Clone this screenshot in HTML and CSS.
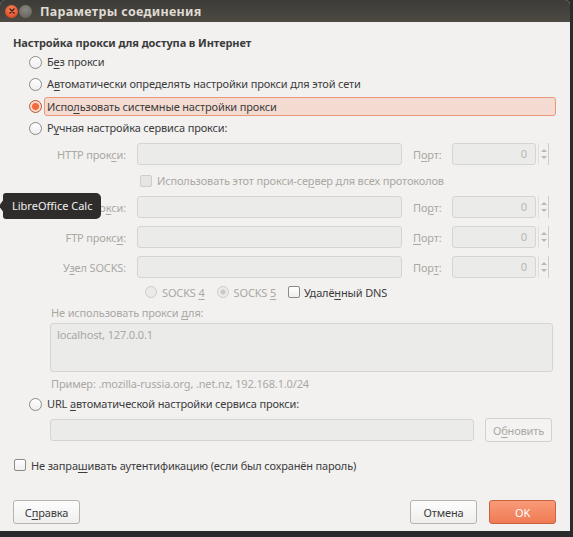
FILE: index.html
```html
<!DOCTYPE html>
<html lang="ru">
<head>
<meta charset="utf-8">
<title>Параметры соединения</title>
<link rel="stylesheet" href="styles.css">
</head>
<body>
<div class="screen">
  <div class="window">
    <div class="titlebar">
      <span class="wbtn close"><svg width="12" height="12" viewBox="0 0 12 12"><path d="M4 4 L8 8 M8 4 L4 8" stroke="#3a1a10" stroke-width="1.4" stroke-linecap="round"/></svg></span>
      <span class="wbtn min"></span>
      <span class="title">Параметры соединения</span>
    </div>
    <div class="content">
      <div class="heading">Настройка прокси для доступа в Интернет</div>
      <div class="opt"><span class="radio"></span><span class="otext">Б<u>е</u>з прокси</span></div>
      <div class="opt"><span class="radio"></span><span class="otext">А<u>в</u>томатически определять настройки прокси для этой сети</span></div>
      <div class="opt"><span class="radio on"></span><span class="otext focus">Испо<u>л</u>ьзовать системные настройки прокси</span></div>
      <div class="opt"><span class="radio"></span><span class="otext">Р<u>у</u>чная настройка сервиса прокси:</span></div>

      <div class="manual">
        <div class="prow">
          <span class="plabel">HTTP прок<u>с</u>и:</span>
          <span class="field host"></span>
          <span class="portlabel">П<u>о</u>рт:</span>
          <span class="spin"><span class="field port">0</span><span class="arrows"><i class="up"></i><i class="down"></i></span></span>
        </div>
        <div class="allrow"><span class="check dis"></span><span>Использовать этот прокси-се<u>р</u>вер для всех протоколов</span></div>
        <div class="prow">
          <span class="plabel">SSL про<u>к</u>си:</span>
          <span class="field host"></span>
          <span class="portlabel">По<u>р</u>т:</span>
          <span class="spin"><span class="field port">0</span><span class="arrows"><i class="up"></i><i class="down"></i></span></span>
        </div>
        <div class="prow gap">
          <span class="plabel">FTP прокс<u>и</u>:</span>
          <span class="field host"></span>
          <span class="portlabel"><u>П</u>орт:</span>
          <span class="spin"><span class="field port">0</span><span class="arrows"><i class="up"></i><i class="down"></i></span></span>
        </div>
        <div class="prow gap">
          <span class="plabel">У<u>з</u>ел SOCKS:</span>
          <span class="field host"></span>
          <span class="portlabel">Пор<u>т</u>:</span>
          <span class="spin"><span class="field port">0</span><span class="arrows"><i class="up"></i><i class="down"></i></span></span>
        </div>
        <div class="socksrow">
          <span class="sopt"><span class="radio dis"></span><span>SOCKS <u>4</u></span></span>
          <span class="sopt"><span class="radio dis sel"></span><span>SOCKS <u>5</u></span></span>
          <span class="sopt dns"><span class="check"></span><span>Удалё<u>н</u>ный DNS</span></span>
        </div>
        <div class="noproxy">Не использовать прокси <u>д</u>ля:</div>
        <div class="area">localhost, 127.0.0.1</div>
        <div class="example">Пример: .mozilla-russia.org, .net.nz, 192.168.1.0/24</div>
      </div>

      <div class="opt url"><span class="radio"></span><span class="otext">URL <u>а</u>втоматической настройки сервиса прокси:</span></div>
      <div class="urlrow">
        <span class="field urlfield"></span>
        <span class="btn disbtn">О<u>б</u>новить</span>
      </div>
      <div class="authrow"><span class="check"></span><span>Не запра<u>ш</u>ивать аутентификацию (если был сохранён пароль)</span></div>
      <div class="buttons">
        <span class="btn">С<u>п</u>равка</span>
        <span class="spacer"></span>
        <span class="btn">Отмена</span>
        <span class="btn ok">OK</span>
      </div>
    </div>
  </div>
  <div class="tooltip">LibreOffice Calc</div>
</div>
</body>
</html>
```

FILE: styles.css
```css
* { box-sizing: border-box; }
html, body { margin: 0; padding: 0; }
body {
  background: #2a2a2c;
  font-family: "Noto Sans", "DejaVu Sans", sans-serif;
  font-size: 11px;
  letter-spacing: -0.15px;
  color: #3c3c3c;
}
u { text-decoration: underline; text-underline-offset: 2px; }
.screen { position: relative; width: 573px; height: 537px; overflow: hidden; background: #2b2b2d; }
.window {
  width: 570px;
  height: 531px;
  background: #f2f1f0;
  border-radius: 5px 5px 0 0;
  overflow: hidden;
}
.titlebar {
  height: 22px;
  background: linear-gradient(#3c3b37, #4d4a43);
  display: flex;
  align-items: center;
  padding-left: 5px;
}
.wbtn {
  width: 13px; height: 13px; border-radius: 50%;
  display: inline-flex; align-items: center; justify-content: center;
}
.close { background: radial-gradient(circle at 50% 35%, #f78a60, #e0502a 70%); }
.min { background: radial-gradient(circle at 50% 35%, #8a8781, #6d6a64 70%); margin-left: 1px; }
.title { color: #dfdbd2; font-weight: bold; font-size: 12.5px; margin-left: 8px; letter-spacing: 0.3px; }
.content { padding: 13px 14px 0 13px; }
.heading { font-weight: bold; line-height: 16px; height: 16px; letter-spacing: -0.1px; }
.opt { display: flex; align-items: center; height: 22px; padding-left: 16px; }
.otext { margin-left: 3px; line-height: 18px; padding: 0 2px; }
.otext.focus {
  flex: 1;
  background: #f3dbd1;
  border: 1px solid #e9987a;
  border-radius: 3px;
  margin-left: 2px;
  padding: 0 2px 0 2px;
  height: 19px;
  line-height: 17px;
}
.radio {
  width: 13px; height: 13px; border-radius: 50%;
  border: 1px solid #8c8a86;
  background: linear-gradient(#ffffff, #eeeeee);
  flex: none;
  position: relative;
}
.radio.on { border-color: #b9542f; background: radial-gradient(circle, #f26a3e 0 3px, #f6d4c6 4px, #fbeee8); }
.radio.dis { border-color: #cfcdc9; background: #ebeae8; }
.radio.dis.sel { background: radial-gradient(circle, #c9c7c3 0 2px, #ebeae8 3px); }
.check {
  width: 12px; height: 12px; border-radius: 2px;
  border: 1px solid #8c8a86;
  background: linear-gradient(#ffffff, #eeeeee);
  flex: none;
}
.check.dis { border-color: #cfcdc9; background: #e6e5e3; }

.manual { color: #aaa8a3; padding-top: 4px; }
.prow { display: flex; align-items: center; height: 22px; }
.prow.gap { margin-top: 8px; }
.plabel { width: 113px; text-align: right; flex: none; }
.field {
  display: block;
  background: #ebebea;
  border: 1px solid #d6d4d0;
  border-radius: 3px;
  height: 22px;
}
.host { width: 265px; margin-left: 11px; flex: none; }
.portlabel { margin-left: 11px; width: 39px; flex: none; }
.spin { display: flex; align-items: center; }
.port { width: 84px; text-align: right; padding-right: 8px; line-height: 20px; color: #b8b6b1; }
.arrows {
  display: flex; flex-direction: column; align-items: center; justify-content: center;
  gap: 4px;
  width: 11px; height: 22px; margin-left: 2px;
  border-left: 1px solid #e0dfdc; border-right: 1px solid #cfcdc9;
}
.arrows i { display: block; width: 0; height: 0; border-left: 3px solid transparent; border-right: 3px solid transparent; }
.arrows .up { border-bottom: 3px solid #b9b7b3; }
.arrows .down { border-top: 3px solid #b9b7b3; }
.allrow { display: flex; align-items: center; height: 31px; padding-left: 127px; gap: 5px; }
.socksrow { display: flex; align-items: center; height: 28px; padding-left: 132px; }
.sopt { display: flex; align-items: center; gap: 5px; margin-right: 12px; }
.sopt .radio { width: 12px; height: 12px; }
.sopt.dns { margin-left: 0; color: #3c3c3c; gap: 4px; }
.noproxy { padding-left: 38px; line-height: 14px; height: 17px; }
.area {
  margin-left: 37px; width: 503px; height: 49px;
  background: #ebebea; border: 1px solid #d6d4d0; border-radius: 3px;
  padding: 3px 6px;
  line-height: 16px;
}
.example { padding-left: 38px; height: 22px; line-height: 24px; }
.opt.url { height: 20px; }
.urlrow { display: flex; align-items: center; margin-top: 4px; height: 24px; }
.urlfield { margin-left: 37px; width: 424px; }
.btn {
  display: inline-flex; align-items: center; justify-content: center;
  height: 24px; width: 67px;
  border: 1px solid #b6b3ad;
  border-radius: 3px;
  background: linear-gradient(#fdfdfd, #efeeed);
  color: #3c3c3c;
}
.disbtn { margin-left: 11px; color: #aaa8a3; border-color: #d3d1cd; background: #f4f3f2; width: 67px; }
.authrow { display: flex; align-items: center; gap: 5px; height: 30px; margin-top: 8px; padding-left: 1px; }
.buttons { display: flex; align-items: center; margin-top: 20px; }
.spacer { flex: 1; }
.ok {
  margin-left: 12px; width: 67px;
  background: linear-gradient(#f99a78, #ef7b53);
  border-color: #c8633f;
  color: #ffffff;
}
.tooltip {
  position: absolute;
  left: 3px; top: 193px;
  height: 26px; padding: 0 9px 0 9px;
  background: #2e2d2b;
  color: #f2f1f0;
  border-radius: 3px 5px 5px 3px;
  line-height: 26px;
  font-size: 11px;
  letter-spacing: 0;
}
.tooltip::before {
  content: "";
  position: absolute;
  left: -4px; top: 6px;
  border-top: 7px solid transparent;
  border-bottom: 7px solid transparent;
  border-right: 5px solid #2e2d2b;
}
```
